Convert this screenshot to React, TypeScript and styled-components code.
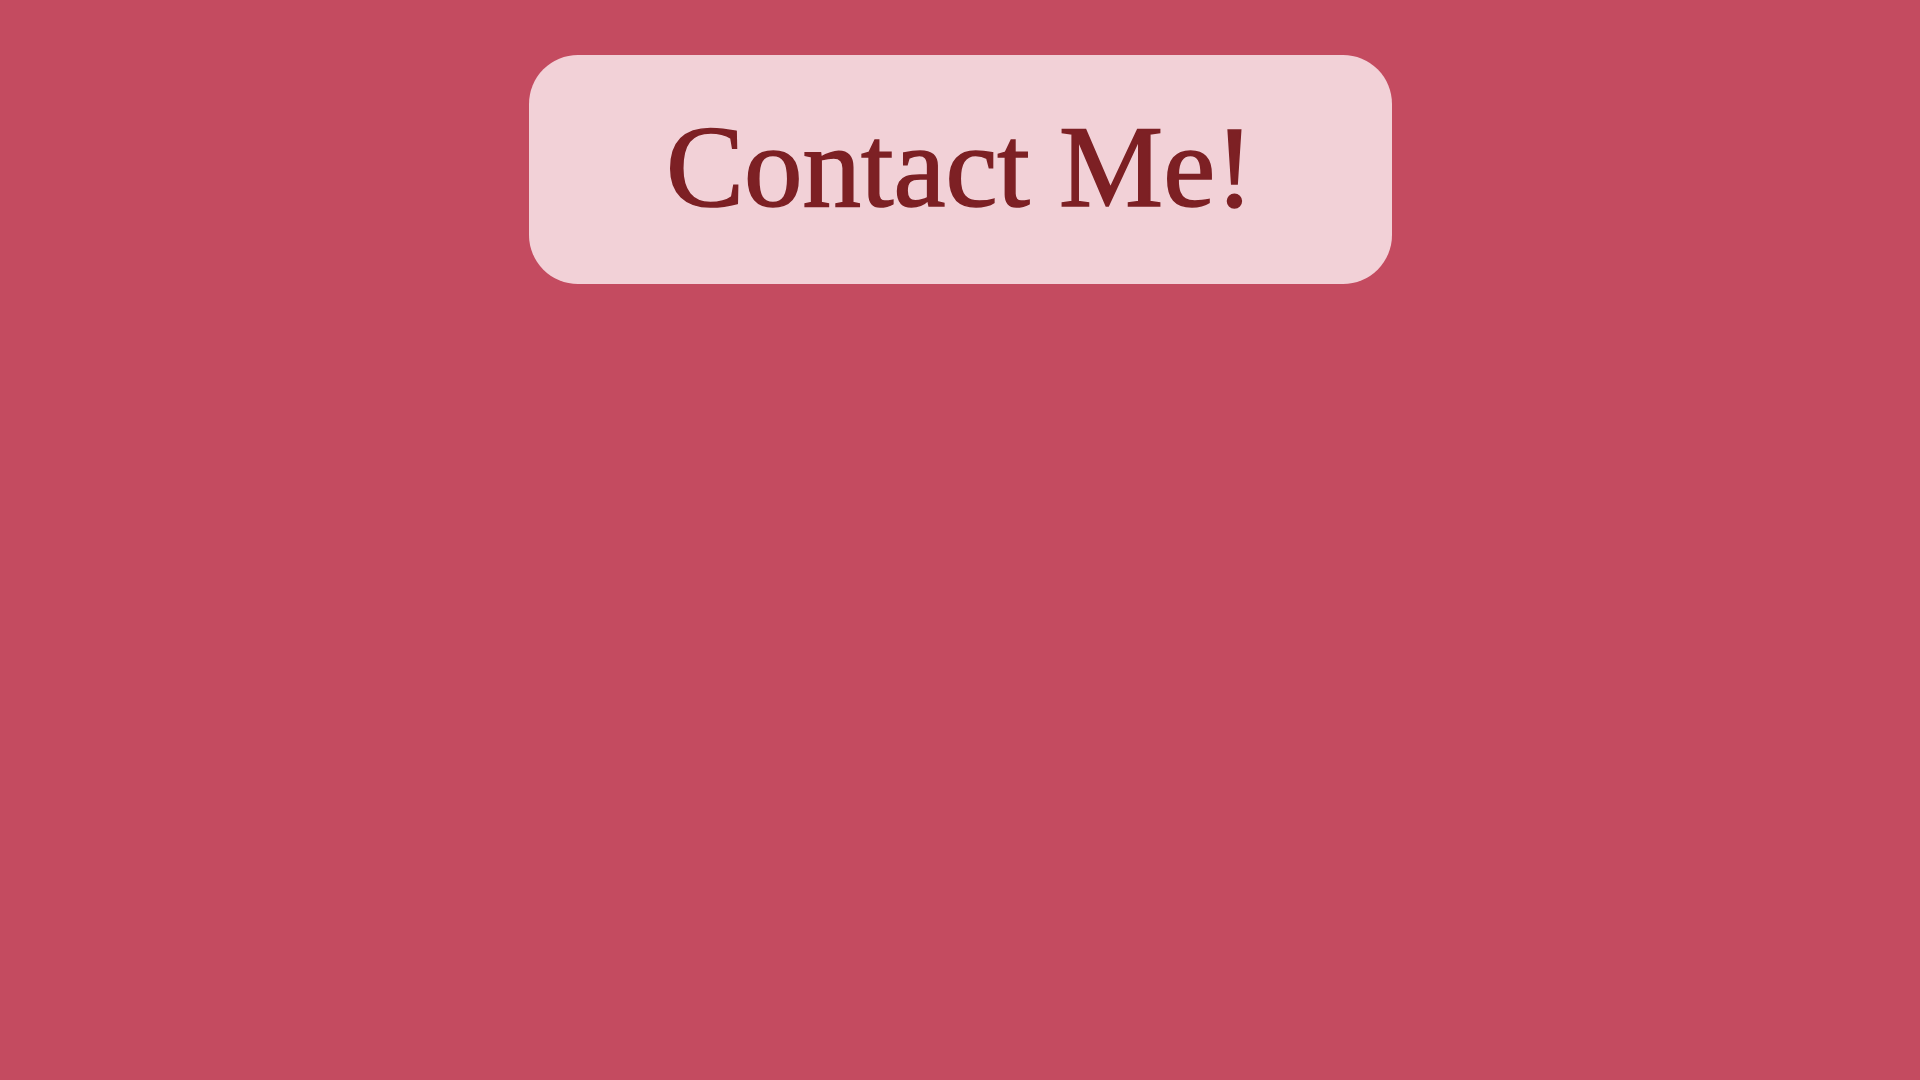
import React from "react";
import styled, { createGlobalStyle } from "styled-components";

const Global = createGlobalStyle`
  html, body { margin: 0; padding: 0; background: #c44b60; }
  body { min-height: 100vh; }
`;

const Page = styled.main`
  min-height: 100vh;
  background: #c44b60;
  display: flex;
  flex-direction: column;
  align-items: center;
  padding-top: 55px;
  box-sizing: border-box;
`;

const Card = styled.section`
  width: 863px;
  height: 229px;
  background: #f2d1d7;
  border-radius: 49px;
  display: flex;
  align-items: center;
  justify-content: center;
  padding-bottom: 7px;
  box-sizing: border-box;
`;

const Title = styled.h1`
  margin: 0;
  font-family: "Liberation Serif", "Times New Roman", serif;
  font-weight: 400;
  font-size: 117px;
  line-height: 1;
  color: #7d2024;
  -webkit-text-stroke: 1.6px #7d2024;
`;

export default function App() {
  return (
    <>
      <Global />
      <Page>
        <Card>
          <Title>Contact Me!</Title>
        </Card>
      </Page>
    </>
  );
}
